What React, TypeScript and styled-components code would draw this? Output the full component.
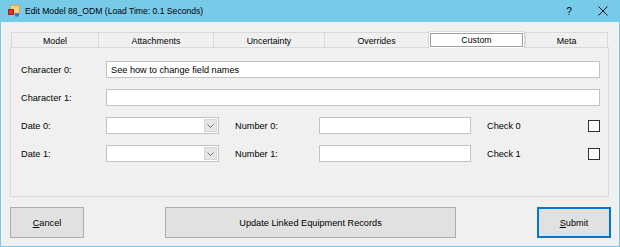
import styled, { createGlobalStyle } from 'styled-components';

const GlobalStyle = createGlobalStyle`
  html, body {
    margin:0;
    padding:0;
    background:#fff;
  }
  body {
    font-family:"Liberation Sans", Arial, sans-serif;
    color:#000;
  }
`;

const Window = styled.div`
  width:620px;
  height:247px;
  box-sizing:border-box;
  border:1px solid #77cbe9;
  border-top:none;
  background:#f0f0f0;
  display:flex;
  flex-direction:column;
`;

const TitleBar = styled.div`
  height:22px;
  margin:0 -1px;
  background:#77cbe9;
  display:flex;
  align-items:center;
  padding-left:8px;
`;

const TitleText = styled.span`
  font-size:8.6px;
  margin-left:5px;
  flex:1;
`;

const CaptionButton = styled.div`
  width:34px;
  height:22px;
  display:flex;
  align-items:center;
  justify-content:center;
  font-size:10px;
`;

const Body = styled.div`
  padding:9px 10px 0 9px;
  display:flex;
  flex-direction:column;
`;

const TabStrip = styled.div`
  display:flex;
  align-items:flex-end;
  height:16px;
  margin-left:1px;
  position:relative;
  z-index:1;
`;

const Tab = styled.div<{ $w: number; $last?: boolean }>`
  width:${p => p.$w}px;
  height:15px;
  box-sizing:border-box;
  border-top:1px solid #d9d9d9;
  border-left:1px solid #d9d9d9;
  border-right:${p => (p.$last ? '1px solid #d9d9d9' : 'none')};
  font-size:8.8px;
  display:flex;
  align-items:center;
  justify-content:center;
  padding-top:2px;
`;

const ActiveTab = styled.div<{ $w: number }>`
  width:${p => p.$w}px;
  height:17px;
  margin-bottom:-1px;
  box-sizing:border-box;
  border:1px solid #d9d9d9;
  border-bottom:none;
  background:#fff;
  padding:1px;
  display:flex;
`;

const FocusBox = styled.div`
  flex:1;
  border:1px solid #9f9f9f;
  font-size:8.8px;
  display:flex;
  align-items:center;
  justify-content:center;
`;

const Panel = styled.div`
  height:150px;
  box-sizing:border-box;
  border:1px solid #d9d9d9;
  background:#f0f0f0;
  padding:13px 8px 0 10px;
`;

const FormGrid = styled.div`
  display:grid;
  grid-template-columns:69px 113px 68px 152px 1fr 12px;
  grid-template-rows:repeat(4, 17px);
  column-gap:16px;
  row-gap:11px;
  align-items:center;
`;

const Label = styled.div`
  font-size:9.2px;
  white-space:nowrap;
`;

const TextBox = styled.div<{ $span?: boolean }>`
  height:17px;
  box-sizing:border-box;
  border:1px solid #c3c3c3;
  background:#fff;
  font-size:9.2px;
  display:flex;
  align-items:center;
  padding-left:4px;
  grid-column:${p => (p.$span ? '2 / -1' : 'auto')};
`;

const Combo = styled.div`
  height:17px;
  box-sizing:border-box;
  border:1px solid #c3c3c3;
  background:#fff;
  display:flex;
  justify-content:flex-end;
  padding:1px;
`;

const DropButton = styled.div`
  width:13px;
  box-sizing:border-box;
  background:#e6e6e6;
  border:1px solid #d4d4d4;
  display:flex;
  align-items:center;
  justify-content:center;
`;

const CheckBox = styled.div`
  width:12px;
  height:12px;
  box-sizing:border-box;
  border:1px solid #333;
  background:#fff;
`;

const ButtonRow = styled.div`
  margin:10px -2px 0 0;
  display:flex;
  justify-content:space-between;
`;

const Button = styled.div<{ $w: number; $default?: boolean }>`
  width:${p => p.$w}px;
  height:31px;
  box-sizing:border-box;
  background:#e1e1e1;
  border:${p => (p.$default ? '2px solid #0078d7' : '1px solid #adadad')};
  font-size:9.2px;
  display:flex;
  align-items:center;
  justify-content:center;
`;

const AppIcon = () => (
  <svg width="12" height="12" viewBox="0 0 12 12">
    <rect x="2.5" y="0.5" width="9" height="8" fill="#fbd38a" stroke="#e8a23a" />
    <rect x="0.5" y="4.5" width="5" height="5" fill="#d9342b" stroke="#b01e17" />
    <rect x="7" y="8" width="4" height="3.5" fill="#2f7fd8" />
  </svg>
);

const CloseIcon = () => (
  <svg width="10" height="10" viewBox="0 0 10 10">
    <path d="M0.5 0.5 L9.5 9.5 M9.5 0.5 L0.5 9.5" stroke="#111" strokeWidth="1" />
  </svg>
);

const Chevron = () => (
  <svg width="7" height="4" viewBox="0 0 7 4">
    <path d="M0.5 0.5 L3.5 3.5 L6.5 0.5" fill="none" stroke="#6d6d6d" strokeWidth="1" />
  </svg>
);

const DateBox = () => (
  <Combo>
    <DropButton>
      <Chevron />
    </DropButton>
  </Combo>
);

const tabs = [
  { name: 'Model', w: 87 },
  { name: 'Attachments', w: 115 },
  { name: 'Uncertainty', w: 111 },
  { name: 'Overrides', w: 104 },
  { name: 'Custom', w: 97, active: true },
  { name: 'Meta', w: 83 },
];

export default function App() {
  return (
    <>
      <GlobalStyle />
      <Window>
        <TitleBar>
          <AppIcon />
          <TitleText>Edit Model 88_ODM (Load Time: 0.1 Seconds)</TitleText>
          <CaptionButton>?</CaptionButton>
          <CaptionButton>
            <CloseIcon />
          </CaptionButton>
        </TitleBar>

        <Body>
          <TabStrip>
            {tabs.map((t, i) =>
              t.active ? (
                <ActiveTab key={t.name} $w={t.w}>
                  <FocusBox>{t.name}</FocusBox>
                </ActiveTab>
              ) : (
                <Tab key={t.name} $w={t.w} $last={i === tabs.length - 1}>
                  {t.name}
                </Tab>
              )
            )}
          </TabStrip>

          <Panel>
            <FormGrid>
              <Label>Character 0:</Label>
              <TextBox $span>See how to change field names</TextBox>

              <Label>Character 1:</Label>
              <TextBox $span />

              <Label>Date 0:</Label>
              <DateBox />
              <Label>Number 0:</Label>
              <TextBox />
              <Label>Check 0</Label>
              <CheckBox />

              <Label>Date 1:</Label>
              <DateBox />
              <Label>Number 1:</Label>
              <TextBox />
              <Label>Check 1</Label>
              <CheckBox />
            </FormGrid>
          </Panel>

          <ButtonRow>
            <Button $w={74}>
              <span><u>C</u>ancel</span>
            </Button>
            <Button $w={291}>Update Linked Equipment Records</Button>
            <Button $w={74} $default>
              <span><u>S</u>ubmit</span>
            </Button>
          </ButtonRow>
        </Body>
      </Window>
    </>
  );
}
